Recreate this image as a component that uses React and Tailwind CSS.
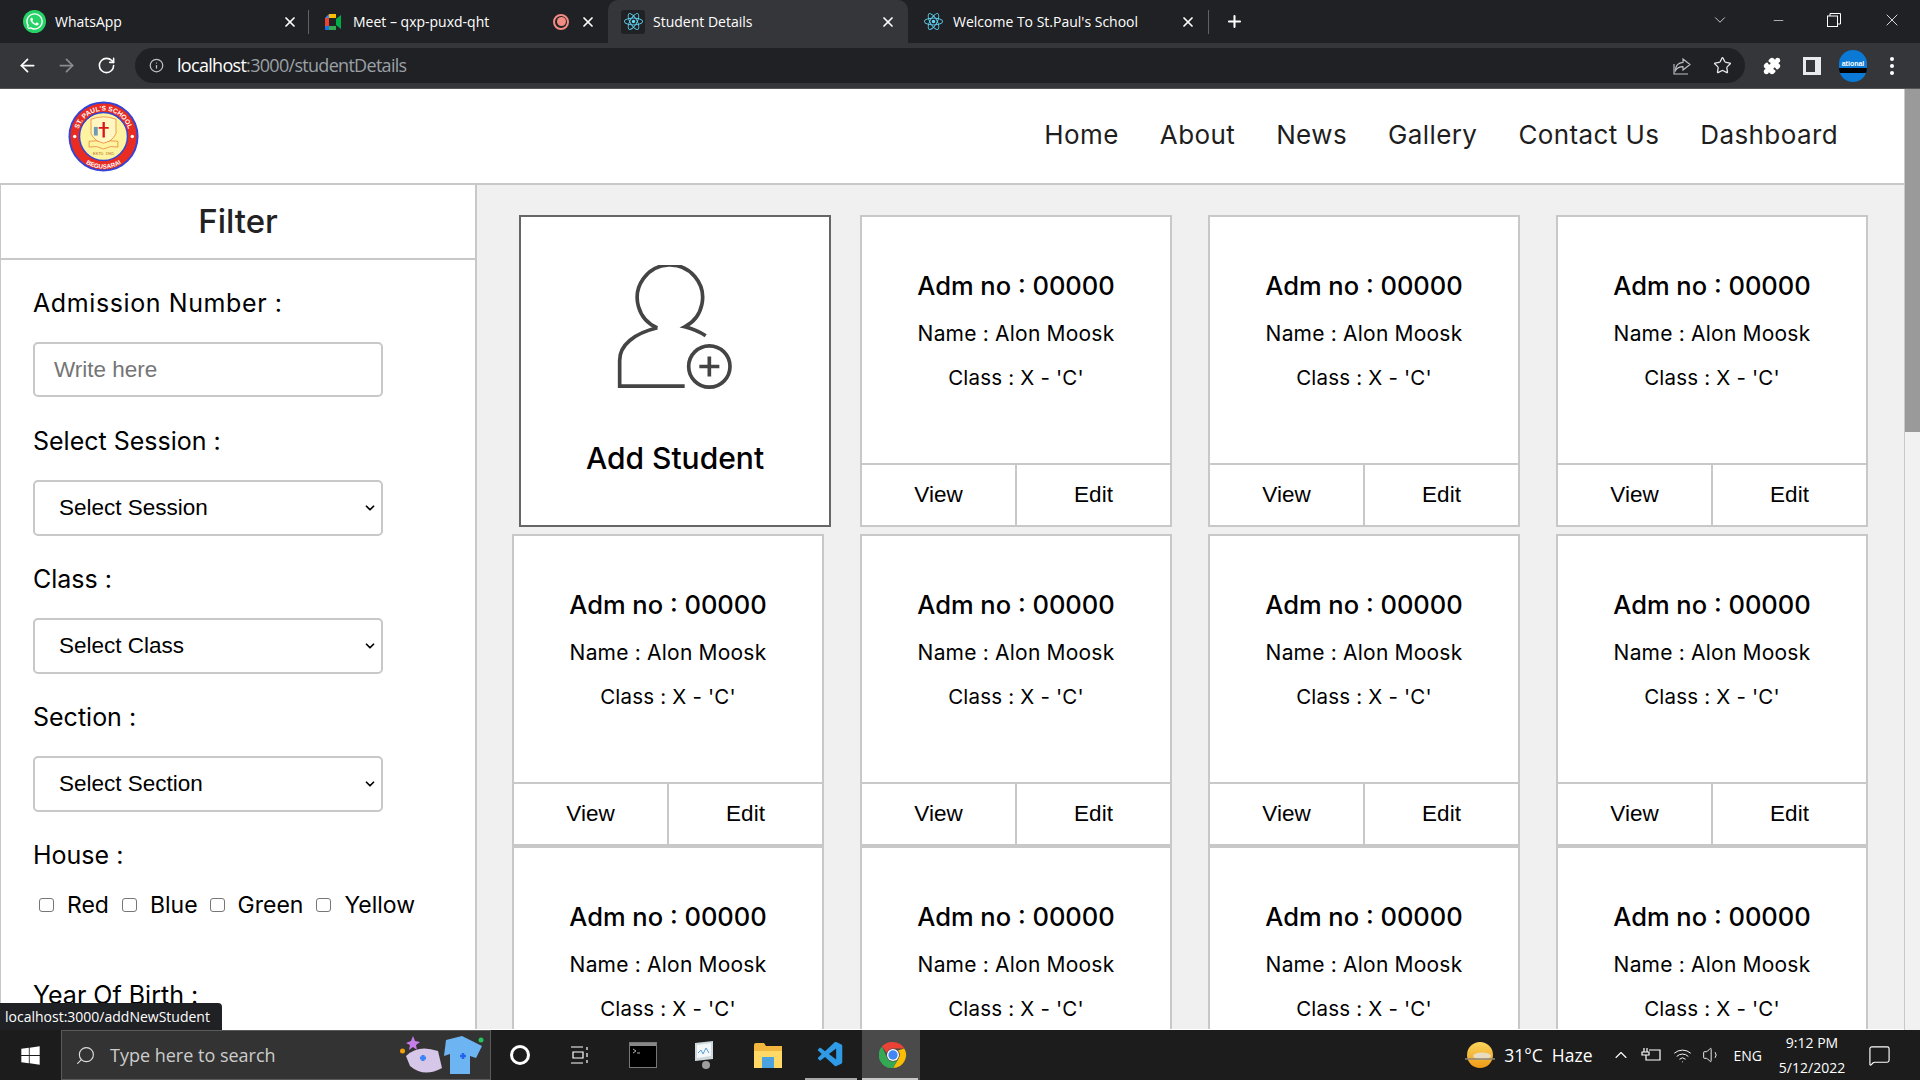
import React from "react";
import { ArrowLeft, ArrowRight, RotateCw, Info, Star, Puzzle, ChevronDown, Minus, X, Plus, Search, ChevronUp, MessageSquare, Volume1, Wifi } from "lucide-react";
import { FaWhatsapp, FaReact, FaWindows } from "react-icons/fa";
import { VscVscode } from "react-icons/vsc";

const tabFont = { fontFamily: '"Open Sans", sans-serif' };

function MeetIcon() {
  return (
    <svg width="18" height="18" viewBox="0 0 18 18">
      <path d="M1 5 L5 1 H12 V5 H5 V13 H1 Z" fill="#4285f4" />
      <path d="M5 1 H12 V5 H5 Z" fill="#fbbc04" />
      <path d="M1 13 H5 V17 H2 Q1 17 1 16 Z" fill="#1a73e8" />
      <path d="M5 13 H12 V17 H5 Z" fill="#34a853" />
      <path d="M12 6 L17 2 V16 L12 12 Z" fill="#00ac47" />
      <path d="M1 5 H5 V13 H1 Z" fill="#ea4335" />
    </svg>
  );
}

function Tab({ icon, label, active, dot, sep, iconBox, first }) {
  const box = first
    ? "relative flex h-[43px] w-[308px] items-center pl-[22px]"
    : active
    ? "relative flex h-[43px] w-[300px] items-center rounded-t-[10px] bg-[#35363a] pl-[13px]"
    : "relative flex h-[43px] w-[300px] items-center pl-[13px]";
  return (
    <div className={box}>
      <div className={iconBox ? "flex h-[24px] w-[24px] items-center justify-center rounded-[3px] bg-[#202124]" : "flex h-[24px] w-[24px] items-center justify-center"}>{icon}</div>
      <span className={first ? "ml-[9px] text-[14px] text-white whitespace-nowrap" : "ml-[8px] text-[14px] text-white whitespace-nowrap"} style={tabFont}>{label}</span>
      <div className="flex-1" />
      {dot && <div className="mr-[11px] flex h-[16px] w-[16px] items-center justify-center rounded-full border-2 border-[#f28b82]"><div className="h-[9px] w-[9px] rounded-full bg-[#f28b82]" /></div>}
      <X size={16} strokeWidth={2.6} className={first ? "mr-[10px] text-white" : "mr-[12px] text-white"} />
      {sep && <div className="absolute right-[-1px] top-[10px] h-[24px] w-px bg-[#5f6368]" />}
    </div>
  );
}

function TabStrip() {
  return (
    <div className="flex h-[43px] items-start bg-[#202124]">
      <div className="flex items-start">
        <Tab first icon={<FaWhatsapp size={23} color="#fff" className="rounded-full bg-[#25d366] p-[2px]" />} label="WhatsApp" sep />
        <Tab icon={<MeetIcon />} label="Meet – qxp-puxd-qht" dot />
        <Tab active iconBox icon={<FaReact size={19} color="#61dafb" />} label="Student Details" />
        <Tab icon={<FaReact size={19} color="#61dafb" />} label="Welcome To St.Paul's School" sep />
        <Plus size={19} strokeWidth={2.6} className="ml-[17px] mt-[12px] text-white" />
      </div>
      <div className="flex-1" />
      <div className="flex items-center pt-[10px] text-white">
        <ChevronDown size={18} strokeWidth={1} className="mr-[42px]" />
        <Minus size={15} strokeWidth={1} className="mr-[41px]" />
        <svg width="14" height="14" viewBox="0 0 14 14" fill="none" stroke="#fff" className="mr-[41px]"><rect x="0.5" y="3" width="10" height="10.500" /><path d="M3 3V0.500H13.500V11H10.500" /></svg>
        <X size={20} strokeWidth={1} className="mr-[18px]" />
      </div>
    </div>
  );
}

function Toolbar() {
  return (
    <div className="flex h-[46px] items-center border-b border-[#555] bg-[#35363a]">
      <ArrowLeft size={21} className="ml-[17px] text-white" />
      <ArrowRight size={21} className="ml-[18px] text-[#8a8b8d]" />
      <RotateCw size={19} className="ml-[20px] text-white" />
      <div className="ml-[19px] flex h-[35px] w-[1610px] items-center rounded-full bg-[#202124]">
        <Info size={15} className="ml-[14px] text-[#bdc1c6]" />
        <span className="ml-[13px] text-[18px] tracking-[-0.7px]" style={tabFont}><span className="text-white">localhost</span><span className="text-[#9aa0a6]">:3000/studentDetails</span></span>
        <div className="flex-1" />
        <svg width="20" height="20" viewBox="0 0 20 20" fill="none" stroke="#bdc1c6" strokeWidth="1.1" className="mr-[21px]"><path d="M11 3l7 5.500-7 5.500v-3.400c-3.800 0-6 1.400-7.600 4C3.600 10 6 6.700 11 6.400z" /><path d="M2 8v10h14" /></svg>
        <Star size={19} className="mr-[13px] text-[#e8eaed]" strokeWidth={1.6} />
      </div>
      <Puzzle size={18} className="ml-[18px] fill-white text-white" />
      <div className="ml-[22px] flex h-[18px] w-[18px] items-center border-[3px] border-[#e8eaed] bg-[#e8eaed]"><div className="h-full w-[9px] bg-[#35363a]" /></div>
      <div className="relative ml-[18px] flex h-[32px] w-[28px] flex-col items-center justify-center overflow-hidden rounded-full bg-[#0a7ad6]">
        <span className="text-[7px] font-bold leading-[9px] text-white whitespace-nowrap" style={{ fontFamily: '"Liberation Sans", sans-serif' }}>ational</span>
        <div className="h-[5px] w-full bg-black" />
      </div>
      <div className="ml-[23px] flex flex-col gap-[3px]">
        <div className="h-[4px] w-[4px] rounded-full bg-white" />
        <div className="h-[4px] w-[4px] rounded-full bg-white" />
        <div className="h-[4px] w-[4px] rounded-full bg-white" />
      </div>
    </div>
  );
}

function Logo() {
  return (
    <svg width="71" height="71" viewBox="0 0 74 74" className="ml-[68px]">
      <defs>
        <path id="topArc" d="M10 37 A27 27 0 0 1 64 37" />
        <path id="botArc" d="M3.500 37 A33.500 33.500 0 0 0 70.500 37" />
      </defs>
      <circle cx="37" cy="37" r="35.500" fill="#e92c22" stroke="#3344d6" strokeWidth="2" />
      <circle cx="37" cy="37" r="25" fill="#fdf3a0" stroke="#3344d6" strokeWidth="1.500" />
      <text fontSize="7" fontWeight="700" fill="#fff" style={{ fontFamily: '"Liberation Sans", sans-serif' }}><textPath href="#topArc" startOffset="50%" textAnchor="middle">ST. PAUL'S SCHOOL</textPath></text>
      <text fontSize="6.500" fontWeight="700" fill="#fff" style={{ fontFamily: '"Liberation Sans", sans-serif' }}><textPath href="#botArc" startOffset="50%" textAnchor="middle">BEGUSARAI</textPath></text>
      <circle cx="7" cy="37" r="1.800" fill="#fff" />
      <circle cx="67" cy="37" r="1.800" fill="#fff" />
      <path d="M24 19 Q37 14 50 19 V34 Q46 42 37 45 Q28 42 24 34 Z" fill="#fff6c2" stroke="#e8833a" strokeWidth="0.800" />
      <path d="M36 22h2.400v5h4v2h-4v9H36v-9h-4v-2h4z" fill="#d9141c" />
      <rect x="27" y="27" width="4" height="9" fill="#6d9ab5" />
      <path d="M22 42 Q30 40 37 44 Q44 40 52 42 V48 Q44 46 37 50 Q30 46 22 48 Z" fill="#fdf3a0" stroke="#e8833a" strokeWidth="0.800" />
      <text x="37" y="56" textAnchor="middle" fontSize="4" fill="#b5651d" style={{ fontFamily: '"Liberation Sans", sans-serif' }}>ESTD. 1965</text>
    </svg>
  );
}

function Header() {
  const items = ["Home", "About", "News", "Gallery", "Contact Us", "Dashboard"];
  return (
    <div className="flex h-[96px] items-center justify-between border-b-2 border-[#c8c8c8] bg-white pr-[66px]">
      <Logo />
      <nav className="flex gap-[41px] pb-[3px] text-[26px] text-[#1e1e1e] tracking-[0.4px]" style={{ fontFamily: 'Inter, sans-serif' }}>
        {items.map((t) => <span key={t}>{t}</span>)}
      </nav>
    </div>
  );
}

const labelCls = "h-[38px] text-[25px] leading-[38px] text-black whitespace-nowrap";
const ctlFont = { fontFamily: '"Liberation Sans", sans-serif' };

function Field({ label, options }) {
  return (
    <div className="mb-[24px]">
      <div className={labelCls}>{label}</div>
      <div className="mt-[20px] flex h-[56px] w-[350px] items-center justify-between rounded-[5px] border-2 border-[#c8c8c8] bg-white pl-[24px] pr-[4px] text-[22.5px] text-black" style={ctlFont}>
        <span>{options}</span>
        <ChevronDown size={14} strokeWidth={3} className="text-black" />
      </div>
    </div>
  );
}

function Check({ label, text }) {
  return (
    <div className="flex items-center">
      <div className="h-[14px] w-[15px] rounded-[3px] border border-[#767676] bg-white" />
      <span className={text + " text-[23px] leading-[30px] text-black"}>{label}</span>
    </div>
  );
}

function Sidebar() {
  return (
    <aside className="h-[844px] w-[477px] shrink-0 overflow-hidden border-x border-r-2 border-[#c8c8c8] bg-white" style={{ fontFamily: 'Inter, sans-serif' }}>
      <div className="flex h-[75px] items-center justify-center border-b-2 border-[#c8c8c8] text-[33px] font-medium text-[#222]">
        <span>Filter</span>
      </div>
      <div className="pl-[32px] pt-[24px]">
        <div className="mb-[25px]">
          <div className={labelCls + " tracking-[0.6px]"}>Admission Number :</div>
          <div className="mt-[20px] flex h-[55px] w-[350px] items-center rounded-[5px] border-2 border-[#c8c8c8] bg-white pl-[19px] text-[22.5px] text-[#757575]" style={ctlFont}>Write here</div>
        </div>
        <Field label="Select Session :" options="Select Session" />
        <Field label="Class :" options="Select Class" />
        <Field label="Section :" options="Select Section" />
        <div className={labelCls}>House :</div>
        <div className="mt-[16px] flex pl-[6px]">
          <Check label="Red" text="ml-[13px] mr-[13px]" />
          <Check label="Blue" text="ml-[13px] mr-[12px]" />
          <Check label="Green" text="ml-[13px] mr-[13px]" />
          <Check label="Yellow" text="ml-[13px]" />
        </div>
        <div className={labelCls + " mt-[56px]"}>Year Of Birth :</div>
      </div>
    </aside>
  );
}

function AddCard() {
  return (
    <div className="-mr-[7px] ml-[7px] flex h-[312px] w-[312px] shrink-0 flex-col items-center border-2 border-[#666] bg-white" style={{ fontFamily: 'Inter, sans-serif' }}>
      <svg width="120" height="127" viewBox="340 190 360 380" fill="none" stroke="#444" strokeWidth="11" className="mt-[48px] ml-[-3px]">
        <path d="M470 378 A98 98 0 1 1 552 375 Q590 385 615 402" />
        <path d="M470 378 C400 395 357 430 357 475 V553 H552" />
        <circle cx="626" cy="494" r="62" />
        <path d="M626 464 V524 M596 494 H656" />
      </svg>
      <div className="mt-[47px] text-[30px] font-medium leading-[38px] text-black whitespace-nowrap">Add Student</div>
    </div>
  );
}

function Card() {
  return (
    <div className="flex h-[312px] w-[312px] shrink-0 flex-col border-2 border-[#c8c8c8] bg-white" style={{ fontFamily: 'Inter, sans-serif' }}>
      <div className="flex h-[248px] flex-col items-center border-b-2 border-[#c8c8c8] pt-[51px] text-black">
        <div className="text-[25.5px] font-medium leading-[36px]">Adm no : 00000</div>
        <div className="mt-[15px] text-[21px] leading-[30px] tracking-[0.2px]">Name : Alon Moosk</div>
        <div className="mt-[14px] text-[20.5px] leading-[30px] tracking-[0.2px]">Class : X - 'C'</div>
      </div>
      <div className="flex flex-1 text-[22.5px] text-black" style={ctlFont}>
        <div className="flex w-[155px] items-center justify-center border-r-2 border-[#c8c8c8]">View</div>
        <div className="flex flex-1 items-center justify-center">Edit</div>
      </div>
    </div>
  );
}

function Main() {
  return (
    <main className="h-[844px] flex-1 overflow-hidden bg-[#f0f0f0] pl-[35px] pt-[30px]">
      <div className="mb-[7px] flex gap-[36px]"><AddCard /><Card /><Card /><Card /></div>
      <div className="flex gap-[36px]"><Card /><Card /><Card /><Card /></div>
      <div className="flex gap-[36px]"><Card /><Card /><Card /><Card /></div>
    </main>
  );
}

function Taskbar() {
  return (
    <div className="relative flex h-[50px] items-center bg-[#1c1c1c] text-white" style={tabFont}>
      <FaWindows size={21} className="ml-[20px]" />
      <div className="ml-[20px] flex h-[50px] w-[430px] items-center border border-[#5a5a5a] bg-[#333]">
        <Search size={21} strokeWidth={1.300} className="ml-[13px] -scale-x-100 text-[#ddd]" />
        <span className="ml-[14px] text-[18px] text-[#ccc]">Type here to search</span>
        <div className="flex-1" />
        <svg width="84" height="42" viewBox="0 0 84 42" className="mr-[6px]">
          <path d="M6 22 Q18 10 38 17 L42 34 Q24 44 10 32 Z" fill="#d6c7e8" />
          <path d="M20 24l6 0M23 21v6" stroke="#3b82f6" strokeWidth="3" />
          <path d="M46 6 L62 2 L82 12 L76 24 L70 22 V40 H50 V20 L44 22 Z" fill="#6db5f2" />
          <path d="M60 22l6 0M63 19v6" stroke="#2563eb" strokeWidth="2.500" />
          <path d="M13 2l2 5 5 1-4 3 1 5-4-3-4 3 1-5-4-2 5-2z" fill="#c77dea" />
          <circle cx="2.500" cy="17" r="2.500" fill="#f59e0b" />
          <circle cx="81" cy="6" r="2.500" fill="#22c55e" />
        </svg>
      </div>
      <div className="flex w-[58px] justify-center"><div className="h-[20px] w-[20px] rounded-full border-[3px] border-white" /></div>
      <div className="flex w-[62px] justify-center">
        <svg width="20" height="20" viewBox="0 0 20 20" fill="none" stroke="#fff" strokeWidth="1.200"><path d="M1 2h12M1 18h12M3 7h10v6H3zM17 2v3M17 8v4M17 15v3" /></svg>
      </div>
      <div className="flex w-[63px] justify-center">
        <svg width="28" height="26" viewBox="0 0 28 26"><rect x="0.500" y="0.500" width="27" height="25" fill="#000" stroke="#777" /><rect x="1" y="1" width="26" height="3" fill="#888" /><path d="M4 7l3 2-3 2M8 11h3" stroke="#ddd" strokeWidth="0.800" fill="none" /></svg>
      </div>
      <div className="flex w-[62px] justify-center">
        <svg width="26" height="30" viewBox="0 0 26 30"><path d="M3 3l18-2v18l-18 2z" fill="#cfd8dc" /><path d="M5 5l14-2v13l-14 2z" fill="#f4f7f8" /><path d="M6 13l3-3 2 4 3-6 3 5" stroke="#5b9bd5" fill="none" /><circle cx="14" cy="25" r="4" fill="#9e9e9e" /></svg>
      </div>
      <div className="flex w-[63px] justify-center">
        <svg width="28" height="26" viewBox="0 0 28 26"><path d="M0 3q0-2 2-2h8l2 3h16v22H0z" fill="#f3b73f" /><path d="M0 9h28v17H0z" fill="#ffd966" /><rect x="8" y="15" width="12" height="11" fill="#4aa3df" /></svg>
      </div>
      <div className="flex h-[50px] w-[63px] items-center justify-center"><VscVscode size={30} color="#2f9be6" /></div>
      <div className="flex h-[50px] w-[58px] items-center justify-center bg-[#4a4a4a] pl-[3px]">
        <svg width="28" height="28" viewBox="0 0 28 28">
          <path d="M14 1a13 13 0 0 1 11.300 6.500H14A6.500 6.500 0 0 0 7.800 12L3 5.500A13 13 0 0 1 14 1z" fill="#ea4335" />
          <path d="M25.300 7.500A13 13 0 0 1 14 27l5.700-9.800A6.500 6.500 0 0 0 19 9.500z" fill="#fbbc04" />
          <path d="M3 5.500A13 13 0 0 0 14 27l5.700-9.800A6.500 6.500 0 0 1 8 16.500z" fill="#34a853" />
          <circle cx="14" cy="14" r="6" fill="#fff" /><circle cx="14" cy="14" r="4.700" fill="#4285f4" />
        </svg>
      </div>
      <div className="flex-1" />
      <svg width="30" height="28" viewBox="0 0 30 28"><defs><linearGradient id="sun" x1="0" y1="0" x2="0" y2="1"><stop offset="0" stopColor="#f9d65c" /><stop offset="1" stopColor="#f09a16" /></linearGradient></defs><circle cx="15" cy="14" r="13" fill="url(#sun)" /><ellipse cx="17" cy="15" rx="9" ry="3.500" fill="#e8dcc0" /><path d="M0 18h30" stroke="#8d8678" strokeWidth="1.500" /></svg>
      <span className="ml-[9px] mr-[18px] text-[17.5px] whitespace-nowrap">31°C&nbsp; Haze</span>
      <ChevronUp size={20} strokeWidth={1.300} className="mr-[10px]" />
      <svg width="20" height="14" viewBox="0 0 20 14" fill="none" stroke="#fff" strokeWidth="1.200" className="mr-[12px]"><path d="M3 0v4M6 0v4M1 4h7v3H1zM5 7v5h14V2H8" /></svg>
      <Wifi size={19} strokeWidth={1.200} className="mr-[10px]" />
      <Volume1 size={20} strokeWidth={1.100} className="mr-[12px]" />
      <span className="mr-[14px] text-[14px]">ENG</span>
      <div className="mr-[20px] flex w-[72px] flex-col items-center text-[14px] leading-[25px]"><span>9:12 PM</span><span>5/12/2022</span></div>
      <MessageSquare size={23} strokeWidth={1.200} className="mr-[29px]" />
      <div className="absolute bottom-0 left-[805px] h-[2px] w-[52px] bg-[#a8a8a8]" />
      <div className="absolute bottom-0 left-[862px] h-[2px] w-[56px] bg-[#c8c8c8]" />
    </div>
  );
}

export default function App() {
  return (
    <div className="relative flex h-[1080px] w-[1920px] flex-col overflow-hidden bg-white">
      <TabStrip />
      <Toolbar />
      <div className="flex h-[941px]">
        <div className="w-[1904px] shrink-0">
          <Header />
          <div className="flex"><Sidebar /><Main /></div>
        </div>
        <div className="flex w-[16px] flex-col border-l border-[#c8c8c8] bg-[#f1f1f1]"><div className="h-[343px] bg-[#9a9a9a]" /></div>
      </div>
      <Taskbar />
      <div className="absolute bottom-[50px] left-0 flex h-[27px] w-[222px] items-center rounded-tr-[4px] bg-[#202124] pl-[5px] text-[14px] text-white whitespace-nowrap" style={tabFont}>localhost:3000/addNewStudent</div>
    </div>
  );
}
